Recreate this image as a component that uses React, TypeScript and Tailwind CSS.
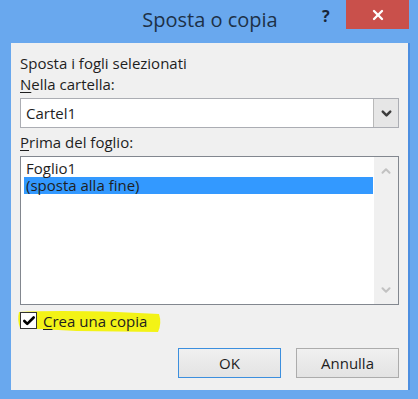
import { Check, ChevronDown, ChevronUp, X } from 'lucide-react';

const font = { fontFamily: '"Open Sans", "Noto Sans", sans-serif' };

function Label({ accel, rest }: { accel: string; rest: string }) {
  return (
    <p className="text-[15px] leading-[19px] text-[#1e1e1e]">
      <span className="underline underline-offset-2">{accel}</span>
      {rest}
    </p>
  );
}

export default function App() {
  return (
    <div
      className="w-[418px] h-[399px] bg-[#69a8ee] flex flex-col overflow-hidden"
      style={font}
    >
      {/* Title bar */}
      <div className="h-[43px] flex items-start relative">
        <div className="flex-1 flex justify-center pt-[6px] pl-[2px]">
          <span className="text-[20px] leading-[28px] text-[#1d3147]">Sposta o copia</span>
        </div>
        <span className="absolute left-[322px] top-[4px] text-[16px] font-bold text-[#17263a]">?</span>
        <div className="absolute left-[346px] top-0 w-[63px] h-[29px] bg-[#c9504b] flex items-center justify-center">
          <X className="w-[16px] h-[16px] text-white" strokeWidth={3.5} />
        </div>
      </div>

      <div className="flex">
        {/* Client area */}
        <div className="ml-[11px] w-[397px] h-[347px] bg-[#f0f0f0] px-[9px] flex flex-col">
          <p className="mt-[11px] text-[15px] leading-[19px] text-[#1e1e1e]">Sposta i fogli selezionati</p>
          <div className="mt-[2px]">
            <Label accel="N" rest="ella cartella:" />
          </div>

          {/* Combo box */}
          <div className="mt-[4px] h-[30px] w-[379px] border border-[#abadb3] bg-white flex items-stretch">
            <div className="flex-1 flex items-center pl-[5px] text-[15px] text-[#1e1e1e]">Cartel1</div>
            <div className="w-[25px] bg-[#e6e6e6] border-l border-[#b9b9b9] flex items-center justify-center">
              <ChevronDown className="w-[15px] h-[15px] text-[#3c3c3c]" strokeWidth={4} />
            </div>
          </div>

          <div className="mt-[5px]">
            <Label accel="P" rest="rima del foglio:" />
          </div>

          {/* List box */}
          <div className="mt-[4px] h-[149px] w-[379px] border border-[#82878f] bg-white flex">
            <div className="flex-1 pt-[3px] pl-[3px] pr-[1px]">
              <div className="h-[17px] flex items-center pl-[2px] text-[15px] leading-[17px] text-[#1e1e1e]">Foglio1</div>
              <div className="h-[17px] flex items-center pl-[2px] text-[15px] leading-[17px] text-[#1e1e1e] bg-[#3399ff]">
                (sposta alla fine)
              </div>
            </div>
            <div className="w-[24px] bg-[#f0f0f0] flex flex-col items-center justify-between py-[7px]">
              <ChevronUp className="w-[14px] h-[14px] text-[#c2c2c2]" strokeWidth={3.5} />
              <ChevronDown className="w-[14px] h-[14px] text-[#c2c2c2]" strokeWidth={3.5} />
            </div>
          </div>

          {/* Checkbox row with highlighter mark */}
          <div className="mt-[7px] relative h-[17px] flex items-center">
            <svg className="absolute left-[-3px] top-[-3px]" width="146" height="25" viewBox="0 0 146 25">
              <path d="M2 3 Q40 1 100 3 L142 5 Q145 14 141 23 L60 22 Q20 20 3 19 Q0 11 2 3 Z" fill="#f3f316" />
            </svg>
            <div className="relative w-[17px] h-[17px] border border-[#333] bg-white flex items-center justify-center">
              <Check className="w-[14px] h-[14px] text-black" strokeWidth={4.5} />
            </div>
            <span className="relative ml-[6px] text-[15px] leading-[19px] text-[#1e1e1e] mt-[2px]">
              <span className="underline underline-offset-2">C</span>rea una copia
            </span>
          </div>

          {/* Buttons */}
          <div className="mt-[19px] flex justify-end gap-[15px]">
            <button className="w-[103px] h-[30px] border border-[#3c8fde] bg-gradient-to-b from-[#f0f0f0] to-[#e3e3e3] text-[15px] text-[#1e1e1e]">
              OK
            </button>
            <button className="w-[103px] h-[30px] border border-[#acacac] bg-gradient-to-b from-[#f0f0f0] to-[#e3e3e3] text-[15px] text-[#1e1e1e]">
              Annulla
            </button>
          </div>
        </div>
        <div className="w-[2px] h-[347px] bg-[#4c8ee0]" />
      </div>
    </div>
  );
}
